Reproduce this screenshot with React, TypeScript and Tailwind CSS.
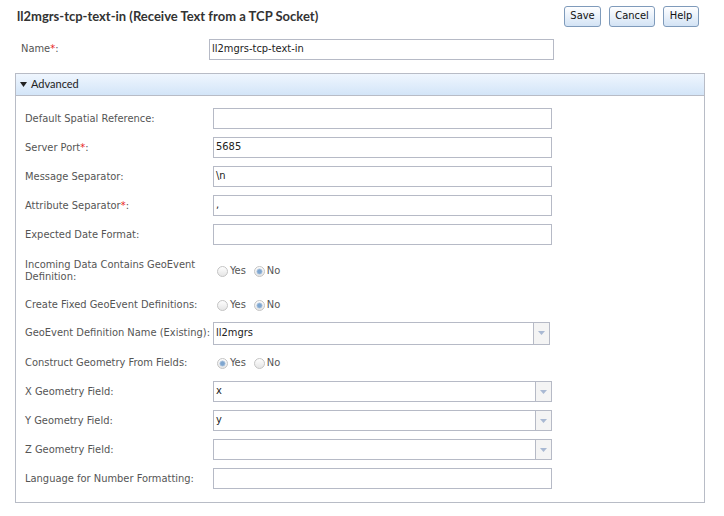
import React from "react";

const labelFont = { fontFamily: '"DejaVu Sans Condensed", "DejaVu Sans", Tahoma, sans-serif' } as React.CSSProperties;
const headFont = { fontFamily: 'Lato, "Noto Sans", sans-serif' } as React.CSSProperties;

function Radio({ checked }: { checked: boolean }) {
  return (
    <svg width="11" height="11" viewBox="0 0 11 11" className="shrink-0">
      <defs>
        <linearGradient id={checked ? "rgc" : "rgu"} x1="0" y1="0" x2="0" y2="1">
          <stop offset="0" stopColor="#ffffff" />
          <stop offset="1" stopColor="#e4e4e4" />
        </linearGradient>
      </defs>
      <circle cx="5.5" cy="5.5" r="5" fill={`url(#${checked ? "rgc" : "rgu"})`} stroke="#c4c4c4" strokeWidth="1" />
      {checked && <circle cx="5.5" cy="5.5" r="2.6" fill="#7fa6cf" stroke="#a9c3de" strokeWidth="0.8" />}
    </svg>
  );
}

function RadioPair({ yes }: { yes: boolean }) {
  return (
    <div className="flex items-center pl-[4px] text-[11px] text-[#555]" style={labelFont}>
      <Radio checked={yes} />
      <span className="ml-[2px]">Yes</span>
      <span className="ml-[8px]" />
      <Radio checked={!yes} />
      <span className="ml-[2px]">No</span>
    </div>
  );
}

function Req() {
  return <span className="text-[#e8241c]">*</span>;
}

function TextInput({ value = "", w = "w-[339px]" }: { value?: string; w?: string }) {
  return (
    <div
      className={`${w} h-[21px] border border-[#b6bac6] bg-white flex items-center pl-[2px] text-[11px] text-[#222]`}
      style={labelFont}
    >
      {value}
    </div>
  );
}

function Select({ value = "", w = "w-[339px]", h = "h-[21px]" }: { value?: string; w?: string; h?: string }) {
  return (
    <div className={`${w} ${h} border border-[#b6bac6] bg-white flex items-stretch text-[11px] text-[#222]`} style={labelFont}>
      <div className="flex-1 flex items-center pl-[2px]">{value}</div>
      <div className="w-[16px] border-l border-[#b6bac6] bg-[#f4f4f4] flex items-center justify-center">
        <svg width="7" height="4" viewBox="0 0 7 4">
          <path d="M0 0 H7 L3.5 4 Z" fill="#a9b9d3" />
        </svg>
      </div>
    </div>
  );
}

function Row({ h, label, children }: { h: string; label: React.ReactNode; children: React.ReactNode }) {
  return (
    <div className={`flex items-center ${h}`}>
      <div className="w-[188px] shrink-0 text-[11px] leading-[12px] text-[#555]" style={labelFont}>
        {label}
      </div>
      {children}
    </div>
  );
}

function Button({ children, w }: { children: React.ReactNode; w: string }) {
  return (
    <div
      className={`${w} h-[21px] rounded-[3px] border border-[#7f9bbb] bg-gradient-to-b from-[#ffffff] to-[#d3e3f5] flex items-center justify-center text-[11px] text-[#111]`}
      style={labelFont}
    >
      {children}
    </div>
  );
}

export default function App() {
  return (
    <div className="w-[724px] h-[516px] bg-white overflow-hidden relative">
      <div className="flex items-center justify-between pl-[17px] pr-[25px] pt-[6px]">
        <div className="text-[13px] font-bold text-[#333] leading-[21px]" style={headFont}>
          ll2mgrs-tcp-text-in (Receive Text from a TCP Socket)
        </div>
        <div className="flex gap-[8px]">
          <Button w="w-[37px]">Save</Button>
          <Button w="w-[46px]">Cancel</Button>
          <Button w="w-[36px]">Help</Button>
        </div>
      </div>

      <div className="flex items-center mt-[12px] pl-[21px] h-[21px]">
        <div className="w-[188px] text-[11px] text-[#555]" style={labelFont}>
          Name<Req />:
        </div>
        <TextInput value="ll2mgrs-tcp-text-in" w="w-[345px]" />
      </div>

      <div className="ml-[15px] mt-[13px] w-[690px] h-[430px] border border-[#b8bcc6]">
        <div
          className="h-[22px] border-b border-[#b8bcc6] bg-gradient-to-b from-[#eff6fe] to-[#d3e5f8] flex items-center pl-[4px] text-[11px] text-[#222]"
          style={headFont}
        >
          <svg width="7" height="5" viewBox="0 0 7 5" className="mr-[4px]">
            <path d="M0 0 H7 L3.5 5 Z" fill="#222" />
          </svg>
          Advanced
        </div>
        <div className="pl-[9px] pt-[8px]">
          <Row h="h-[29px]" label="Default Spatial Reference:">
            <TextInput />
          </Row>
          <Row h="h-[29px]" label={<>Server Port<Req />:</>}>
            <TextInput value="5685" />
          </Row>
          <Row h="h-[29px]" label="Message Separator:">
            <TextInput value="\n" />
          </Row>
          <Row h="h-[29px]" label={<>Attribute Separator<Req />:</>}>
            <TextInput value="," />
          </Row>
          <Row h="h-[29px]" label="Expected Date Format:">
            <TextInput />
          </Row>
          <Row h="h-[44px]" label={<span className="block w-[182px]">Incoming Data Contains GeoEvent Definition:</span>}>
            <RadioPair yes={false} />
          </Row>
          <Row h="h-[24px]" label="Create Fixed GeoEvent Definitions:">
            <RadioPair yes={false} />
          </Row>
          <Row h="h-[32px]" label="GeoEvent Definition Name (Existing):">
            <Select value="ll2mgrs" w="w-[337px]" h="h-[23px]" />
          </Row>
          <Row h="h-[28px]" label="Construct Geometry From Fields:">
            <RadioPair yes={true} />
          </Row>
          <Row h="h-[29px]" label="X Geometry Field:">
            <Select value="x" />
          </Row>
          <Row h="h-[29px]" label="Y Geometry Field:">
            <Select value="y" />
          </Row>
          <Row h="h-[29px]" label="Z Geometry Field:">
            <Select />
          </Row>
          <Row h="h-[29px]" label="Language for Number Formatting:">
            <TextInput />
          </Row>
        </div>
      </div>
    </div>
  );
}
